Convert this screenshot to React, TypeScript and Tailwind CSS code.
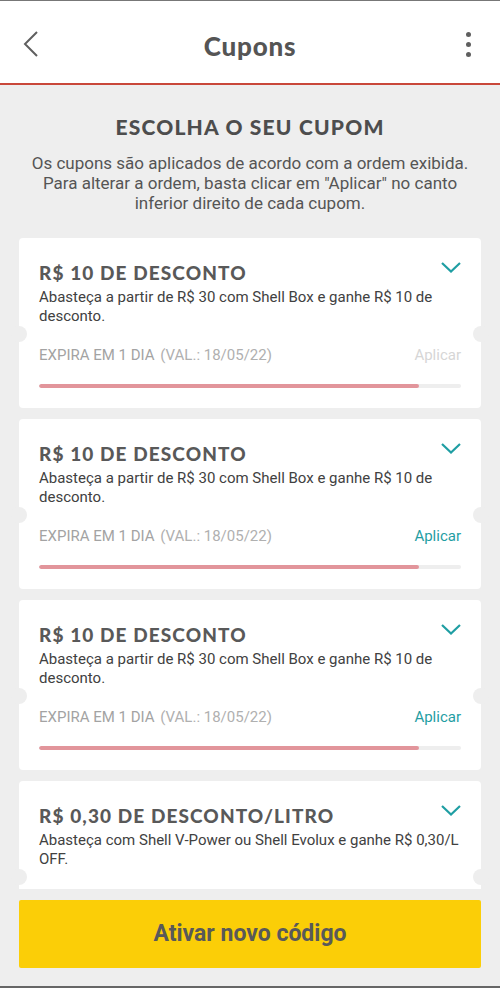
import React from "react";

const coupons = [
  {
    title: "R$ 10 DE DESCONTO",
    desc: "Abasteça a partir de R$ 30 com Shell Box e ganhe R$ 10 de desconto.",
    enabled: false,
  },
  {
    title: "R$ 10 DE DESCONTO",
    desc: "Abasteça a partir de R$ 30 com Shell Box e ganhe R$ 10 de desconto.",
    enabled: true,
  },
  {
    title: "R$ 10 DE DESCONTO",
    desc: "Abasteça a partir de R$ 30 com Shell Box e ganhe R$ 10 de desconto.",
    enabled: true,
  },
  {
    title: "R$ 0,30 DE DESCONTO/LITRO",
    desc: "Abasteça com Shell V-Power ou Shell Evolux e ganhe R$ 0,30/L OFF.",
    enabled: true,
  },
];

const Chevron = () => (
  <svg width="20" height="11" viewBox="0 0 20 11" fill="none">
    <path d="M1 1l9 8.5L19 1" stroke="#1f9ea3" strokeWidth="2.2" />
  </svg>
);

const CouponCard: React.FC<{ title: string; desc: string; enabled: boolean }> = ({
  title,
  desc,
  enabled,
}) => (
  <div className="relative bg-white rounded-[4px] px-5 pt-[21px] pb-5 shrink-0">
    {/* ticket notches */}
    <div className="absolute left-[-8px] top-[88px] w-4 h-4 rounded-full bg-[#eeeeee]" />
    <div className="absolute right-[-8px] top-[88px] w-4 h-4 rounded-full bg-[#eeeeee]" />
    <div className="flex items-start justify-between">
      <h3 className="font-['Lato',sans-serif] font-black text-[19px] leading-[28px] text-[#595959] tracking-[1.1px]">
        {title}
      </h3>
      <div className="mt-[3px]">
        <Chevron />
      </div>
    </div>
    <p className="text-[15px] leading-[19px] text-[#414141] mt-[1px]">{desc}</p>
    <div className="flex items-center justify-between mt-[19px] text-[15px] leading-5">
      <span className="text-[#a3a3a3]">
        EXPIRA EM 1 DIA <span className="ml-[2px] text-[#b0b0b0]">(VAL.: 18/05/22)</span>
      </span>
      <span className={enabled ? "text-[#1f9ea3]" : "text-[#d6d6d6]"}>Aplicar</span>
    </div>
    <div className="mt-[19px] h-1 bg-[#eeeeee] rounded-full overflow-hidden">
      <div className="h-full w-[90%] bg-[#e2959b] rounded-full" />
    </div>
  </div>
);

export default function App() {
  return (
    <div className="w-[500px] h-[988px] flex flex-col bg-[#eeeeee] border-t border-[#777] border-b-2 border-b-[#666] font-['Roboto',sans-serif] overflow-hidden">
      <header className="h-[84px] shrink-0 bg-white border-b-2 border-[#c9473a] flex items-center justify-between px-[22px]">
        <svg width="18" height="28" viewBox="0 0 18 28" fill="none" className="mt-1">
          <path d="M15 2L3 14l12 12" stroke="#5f5f5f" strokeWidth="2" />
        </svg>
        <h1 className="font-['Lato',sans-serif] font-black text-[26px] text-[#555555] tracking-[0.8px] pt-2">
          Cupons
        </h1>
        <div className="flex flex-col gap-[5px] items-center w-[18px] mt-1">
          <span className="w-[5px] h-[5px] rounded-full bg-[#5f5f5f]" />
          <span className="w-[5px] h-[5px] rounded-full bg-[#5f5f5f]" />
          <span className="w-[5px] h-[5px] rounded-full bg-[#5f5f5f]" />
        </div>
      </header>

      <main className="flex-1 min-h-0 overflow-hidden">
        <div className="pt-[28px] flex flex-col">
          <h2 className="text-center font-['Lato',sans-serif] font-black text-[21px] leading-[28px] text-[#4d4d4d] tracking-[1.2px]">
            ESCOLHA O SEU CUPOM
          </h2>
          <p className="text-center text-[17px] leading-5 text-[#555555] mt-[12px] px-[25px]">
            Os cupons são aplicados de acordo com a ordem exibida. Para alterar a ordem, basta
            clicar em "Aplicar" no canto inferior direito de cada cupom.
          </p>
          <div className="flex flex-col gap-[11px] mt-[25px] px-[19px]">
            {coupons.map((c, i) => (
              <CouponCard key={i} {...c} />
            ))}
          </div>
        </div>
      </main>

      <footer className="shrink-0 px-[19px] pt-[11px] pb-[18px]">
        <button className="w-full h-[68px] bg-[#fbce07] rounded-[2px] text-[23px] font-bold text-[#595959]">
          Ativar novo código
        </button>
      </footer>
    </div>
  );
}
